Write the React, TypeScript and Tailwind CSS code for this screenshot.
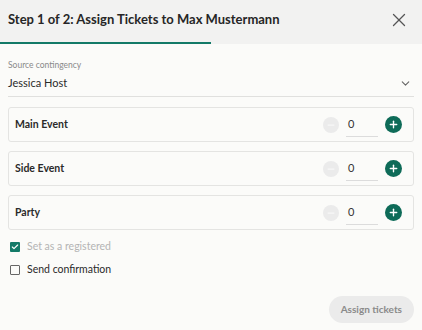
import { ChevronDown, X, Plus, Minus, Check } from "lucide-react";

const events = ["Main Event", "Side Event", "Party"];

function TicketRow({ name }: { name: string }) {
  return (
    <div className="flex h-[35px] items-center justify-between rounded-[3px] border border-[#e4e4e2] bg-[#fbfbf9] pl-[6px] pr-[11px]">
      <span className="text-[10.5px] font-bold text-[#2a2a2a]">{name}</span>
      <div className="flex items-center">
        <button className="flex h-[16px] w-[16px] items-center justify-center rounded-full bg-[#ebebeb] text-[#f8f8f8]">
          <Minus size={10} strokeWidth={3} />
        </button>
        <div className="ml-[7px] flex h-[24px] w-[32px] items-center border-b border-[#dcdcdc] pl-[2px] pt-[1px] text-[11px] text-[#333]">
          0
        </div>
        <button className="ml-[7px] flex h-[17px] w-[17px] items-center justify-center rounded-full bg-[#0e6b58] text-white">
          <Plus size={11} strokeWidth={3} />
        </button>
      </div>
    </div>
  );
}

export default function App() {
  return (
    <div className="h-[330px] w-[422px] overflow-hidden bg-[#fbfbf9] font-['Lato','Noto_Sans',sans-serif]">
      <div className="relative flex h-[44px] items-center justify-between bg-[#f2f2f1] pb-[5px] pl-[8px] pr-[12px]">
        <h1 className="text-[13px] font-bold text-[#262626]">
          Step 1 of 2: Assign Tickets to Max Mustermann
        </h1>
        <X size={22} strokeWidth={1.4} className="text-[#555]" />
        <div className="absolute bottom-0 left-0 h-[2px] w-[211px] bg-[#137a68]" />
      </div>

      <div className="px-[8px] pt-[15px]">
        <div className="text-[8.5px] leading-[13px] text-[#8a8a8a]">Source contingency</div>
        <div className="flex h-[25px] items-center justify-between border-b border-[#e0e0de] pb-[1px]">
          <span className="text-[11px] text-[#2a2a2a]">Jessica Host</span>
          <ChevronDown size={13} className="mr-[2px] text-[#666]" />
        </div>

        <div className="mt-[10px] flex flex-col gap-[9px]">
          {events.map((e) => (
            <TicketRow key={e} name={e} />
          ))}
        </div>

        <div className="mt-[8px] flex h-[18px] items-center gap-[7px] pl-[2px]">
          <span className="flex h-[10px] w-[10px] items-center justify-center rounded-[1px] bg-[#137a68] text-white">
            <Check size={8} strokeWidth={3.5} />
          </span>
          <span className="text-[10.5px] text-[#b4b4b4]">Set as a registered</span>
        </div>
        <div className="mt-[5px] flex h-[18px] items-center gap-[7px] pl-[2px]">
          <span className="h-[10px] w-[10px] rounded-[1px] border-[1.5px] border-[#666]" />
          <span className="text-[10.5px] text-[#2a2a2a]">Send confirmation</span>
        </div>

        <div className="mt-[17px] flex justify-end">
          <button className="h-[27px] rounded-full bg-[#ebebeb] px-[12px] text-[10px] font-bold text-[#8a8a8a]">
            Assign tickets
          </button>
        </div>
      </div>
    </div>
  );
}
